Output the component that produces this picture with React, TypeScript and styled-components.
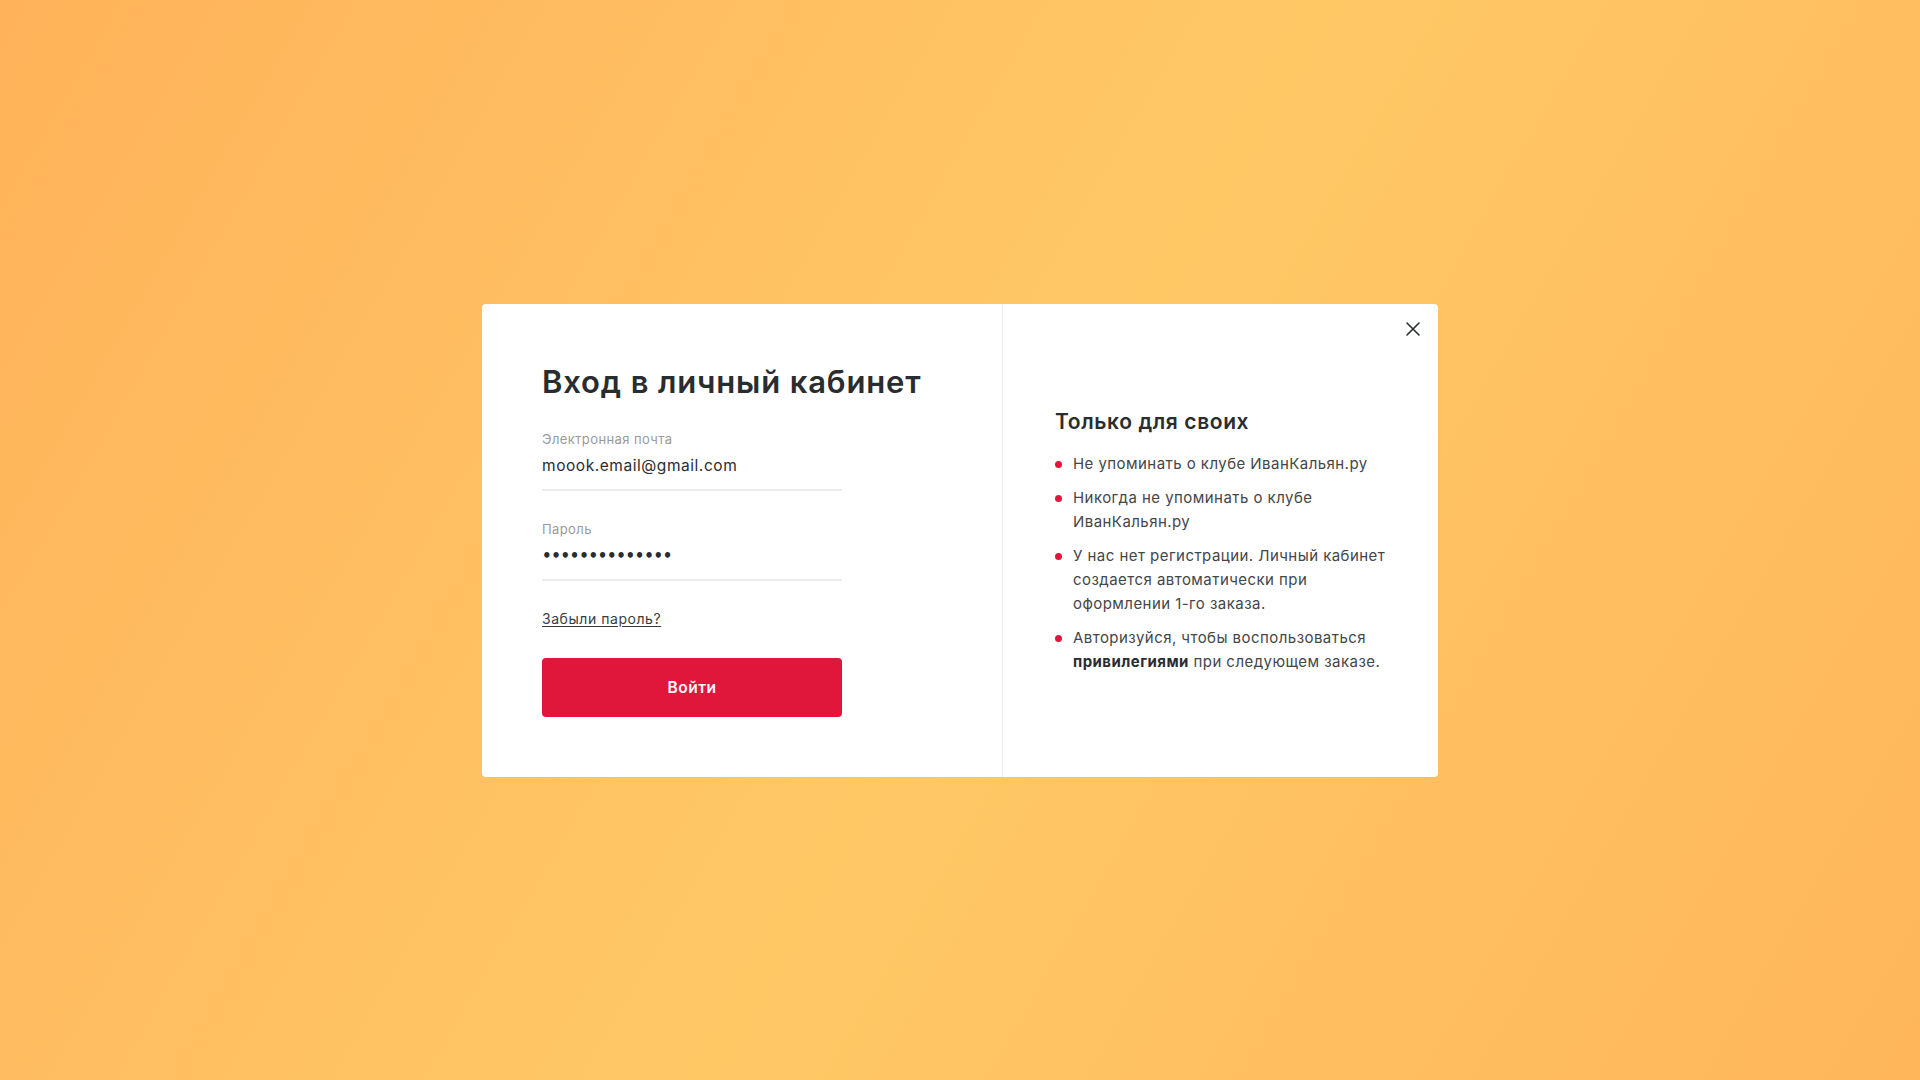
import React from "react";
import styled, { createGlobalStyle } from "styled-components";

const GlobalStyle = createGlobalStyle`
  * { box-sizing: border-box; }
  html, body { margin: 0; padding: 0; }
  body {
    font-family: Inter, "Noto Sans", "Liberation Sans", sans-serif;
    -webkit-font-smoothing: antialiased;
  }
`;

const Page = styled.div`
  width: 100%;
  min-height: 100vh;
  display: flex;
  align-items: center;
  justify-content: center;
  background: linear-gradient(120deg, #ffb259 0%, #ffbf62 30%, #ffc865 52%, #ffbf61 75%, #ffb65b 100%);
`;

const Modal = styled.div`
  position: relative;
  width: 956px;
  height: 473px;
  display: grid;
  grid-template-columns: 521px 1fr;
  background: #ffffff;
  border-radius: 4px;
`;

const LeftPanel = styled.div`
  padding: 59px 60px 60px;
  border-right: 1px solid #ececec;
  display: flex;
  flex-direction: column;
`;

const RightPanel = styled.div`
  padding: 1px 36px 0 52px;
  display: flex;
  flex-direction: column;
  justify-content: center;
`;

const Title = styled.h1`
  margin: 0;
  font-size: 31px;
  line-height: 38px;
  font-weight: 600;
  color: #2a2d2f;
  letter-spacing: 0.85px;
  white-space: nowrap;
`;

const Field = styled.div<{ $top: number }>`
  width: 300px;
  margin-top: ${(p) => p.$top}px;
  border-bottom: 2px solid #ebebeb;
  padding-bottom: 13px;
`;

const Label = styled.div`
  font-size: 13px;
  line-height: 16px;
  color: #999a9c;
  letter-spacing: 0.4px;
`;

const Value = styled.div`
  margin-top: 9px;
  font-size: 15.5px;
  line-height: 20px;
  color: #2a2d2f;
  letter-spacing: 0.55px;
`;

const Dots = styled.div`
  margin-top: 9px;
  font-size: 15px;
  line-height: 20px;
  font-weight: 700;
  color: #2a2d2f;
  letter-spacing: -0.3px;
  font-family: "DejaVu Sans", sans-serif;
`;

const Forgot = styled.a`
  display: inline-block;
  align-self: flex-start;
  margin-top: 29px;
  font-size: 14px;
  line-height: 18px;
  color: #3a3c3e;
  text-decoration: underline;
  text-underline-offset: 2px;
  letter-spacing: 0.55px;
`;

const SubmitButton = styled.button`
  margin-top: 30px;
  width: 300px;
  height: 59px;
  border: none;
  border-radius: 4px;
  background: #e0173b;
  color: #ffffff;
  font-family: inherit;
  font-size: 15.5px;
  font-weight: 600;
  letter-spacing: 0.5px;
  cursor: pointer;
`;

const CloseButton = styled.button`
  position: absolute;
  top: 16px;
  right: 16px;
  width: 18px;
  height: 18px;
  padding: 0;
  border: none;
  background: none;
  display: flex;
  align-items: center;
  justify-content: center;
  cursor: pointer;
`;

const SideTitle = styled.h2`
  margin: 0;
  font-size: 21px;
  line-height: 28px;
  font-weight: 600;
  color: #2a2d2f;
  letter-spacing: 0.6px;
`;

const List = styled.ul`
  list-style: none;
  margin: 16px 0 0;
  padding: 0;
  display: flex;
  flex-direction: column;
  gap: 10px;
`;

const Item = styled.li`
  position: relative;
  padding-left: 18px;
  font-size: 15px;
  line-height: 24px;
  color: #444648;
  letter-spacing: 0.45px;
  max-width: 345px;

  &::before {
    content: "";
    position: absolute;
    left: 0;
    top: 9px;
    width: 7px;
    height: 7px;
    border-radius: 50%;
    background: #e0173b;
  }

  b {
    font-weight: 700;
    color: #2a2d2f;
  }
`;

export default function App() {
  return (
    <>
      <GlobalStyle />
      <Page>
        <Modal>
          <LeftPanel>
            <Title>Вход в личный кабинет</Title>
            <Field $top={30}>
              <Label>Электронная почта</Label>
              <Value>moook.email@gmail.com</Value>
            </Field>
            <Field $top={30}>
              <Label>Пароль</Label>
              <Dots>••••••••••••••</Dots>
            </Field>
            <Forgot href="#">Забыли пароль?</Forgot>
            <SubmitButton>Войти</SubmitButton>
          </LeftPanel>
          <RightPanel>
            <SideTitle>Только для своих</SideTitle>
            <List>
              <Item>Не упоминать о клубе ИванКальян.ру</Item>
              <Item>Никогда не упоминать о клубе ИванКальян.ру</Item>
              <Item>
                У нас нет регистрации. Личный кабинет создается автоматически при оформлении 1-го заказа.
              </Item>
              <Item>
                Авторизуйся, чтобы воспользоваться <b>привилегиями</b> при следующем заказе.
              </Item>
            </List>
          </RightPanel>
          <CloseButton aria-label="Закрыть">
            <svg width="16" height="16" viewBox="0 0 16 16" fill="none">
              <path d="M2 2L14 14M14 2L2 14" stroke="#2a2d2f" strokeWidth="1.6" strokeLinecap="round" />
            </svg>
          </CloseButton>
        </Modal>
      </Page>
    </>
  );
}
